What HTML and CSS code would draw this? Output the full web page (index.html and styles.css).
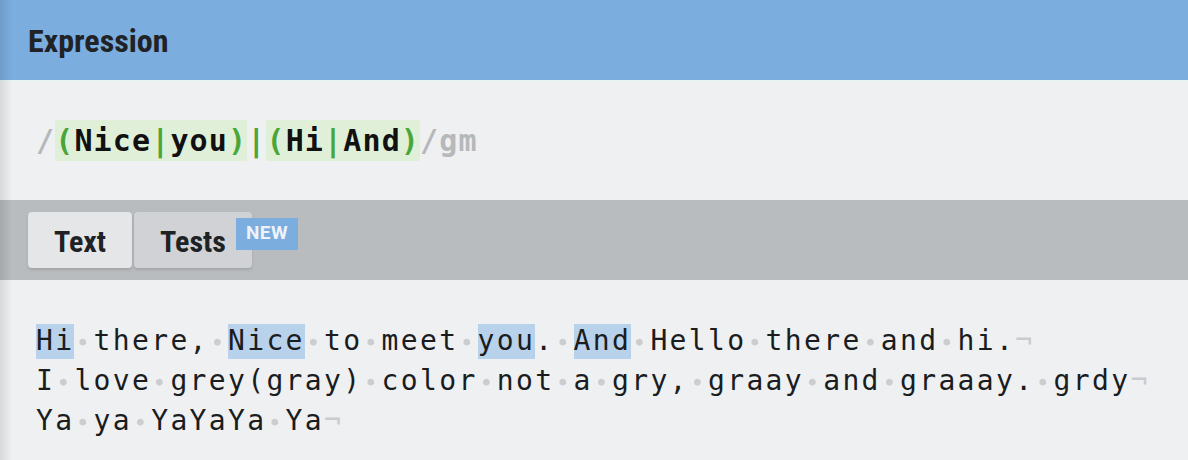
FILE: index.html
```html
<!DOCTYPE html>
<html>
<head>
<meta charset="utf-8">
<link rel="stylesheet" href="styles.css">
</head>
<body>
<div class="page">
  <header class="head"><h1 class="title">Expression</h1></header>
  <section class="expr">
    <div class="regex"><span class="delim">/</span><span class="grp"><span class="op">(</span>Nice<span class="op">|</span>you<span class="op">)</span></span><span class="op">|</span><span class="grp"><span class="op">(</span>Hi<span class="op">|</span>And<span class="op">)</span></span><span class="delim">/gm</span></div>
  </section>
  <nav class="tabbar">
    <div class="tab active">Text</div>
    <div class="tab">Tests<span class="badge">NEW</span></div>
  </nav>
  <section class="textarea">
    <div class="line"><span class="m">Hi</span><span class="s"> </span>there,<span class="s"> </span><span class="m">Nice</span><span class="s"> </span>to<span class="s"> </span>meet<span class="s"> </span><span class="m">you</span>.<span class="s"> </span><span class="m">And</span><span class="s"> </span>Hello<span class="s"> </span>there<span class="s"> </span>and<span class="s"> </span>hi.<span class="nl">¬</span></div>
    <div class="line">I<span class="s"> </span>love<span class="s"> </span>grey(gray)<span class="s"> </span>color<span class="s"> </span>not<span class="s"> </span>a<span class="s"> </span>gry,<span class="s"> </span>graay<span class="s"> </span>and<span class="s"> </span>graaay.<span class="s"> </span>grdy<span class="nl">¬</span></div>
    <div class="line">Ya<span class="s"> </span>ya<span class="s"> </span>YaYaYa<span class="s"> </span>Ya<span class="nl">¬</span></div>
  </section>
</div>
</body>
</html>
```

FILE: styles.css
```css
html, body {
  margin: 0;
  padding: 0;
}
body {
  width: 1188px;
  height: 460px;
  overflow: hidden;
  background: #eef0f2;
  font-family: "Liberation Sans", sans-serif;
}
.page {
  position: relative;
  height: 460px;
}
.page::before {
  content: "";
  position: absolute;
  left: 0;
  top: 0;
  bottom: 0;
  width: 12px;
  background: linear-gradient(to right, rgba(0,0,0,0.10), rgba(0,0,0,0));
  z-index: 5;
  pointer-events: none;
}
.head {
  height: 80px;
  background: #7badde;
  display: flex;
  align-items: center;
  padding-left: 28px;
  box-sizing: border-box;
}
.title {
  margin: 0;
  font-family: "Roboto Condensed", Roboto, sans-serif;
  font-stretch: 75%;
  font-weight: 700;
  font-size: 32px;
  color: #1f2326;
  line-height: 1;
  padding-top: 2px;
}
.expr {
  height: 120px;
  box-sizing: border-box;
  padding: 40px 0 0 36px;
  background: #eef0f2;
  border-top: 1px solid #e2f3f6;
}
.regex {
  font-family: "DejaVu Sans Mono", "Liberation Mono", monospace;
  font-weight: 700;
  font-size: 30px;
  letter-spacing: 1.14px;
  line-height: 40px;
  color: #111;
  white-space: pre;
}
.grp {
  background: #e0f0d8;
  padding: 3px 0;
}
.op {
  color: #4aa638;
}
.delim {
  color: #b6b8ba;
}
.tabbar {
  height: 80px;
  box-sizing: border-box;
  background: #b9bcbe;
  display: flex;
  align-items: flex-start;
  gap: 2px;
  padding: 12px 0 0 28px;
}
.tab {
  position: relative;
  height: 56px;
  box-sizing: border-box;
  display: flex;
  align-items: center;
  justify-content: center;
  background: #d0d2d5;
  border-radius: 4px;
  box-shadow: 0 2px 3px rgba(0,0,0,0.12);
  font-family: "Roboto Condensed", Roboto, sans-serif;
  font-stretch: 75%;
  font-weight: 700;
  font-size: 30px;
  color: #1f2225;
  width: 118px;
  padding-top: 2px;
}
.tab.active {
  width: 104px;
  background: #e4e6e8;
}
.badge {
  position: absolute;
  left: 102px;
  top: 6px;
  width: 62px;
  height: 32px;
  background: #7badde;
  color: #eef3fa;
  font-family: Roboto, sans-serif;
  font-stretch: 100%;
  font-weight: 700;
  font-size: 19px;
  letter-spacing: 0.5px;
  display: flex;
  align-items: center;
  justify-content: center;
  box-sizing: border-box;
  padding-bottom: 3px;
}
.textarea {
  padding: 41px 0 0 36px;
  font-family: "DejaVu Sans Mono", "Liberation Mono", monospace;
  font-size: 28px;
  letter-spacing: 2.34px;
  line-height: 40px;
  color: #1a1c1e;
}
.line {
  height: 40px;
  white-space: pre;
}
.m {
  background: #b8d2ec;
  padding-bottom: 2px;
}
.s {
  background: radial-gradient(circle at 44% 55%, #cbcdcf 0, #cbcdcf 3px, rgba(203,205,207,0) 3.8px);
}
.nl {
  color: #c9cbcd;
}
```
